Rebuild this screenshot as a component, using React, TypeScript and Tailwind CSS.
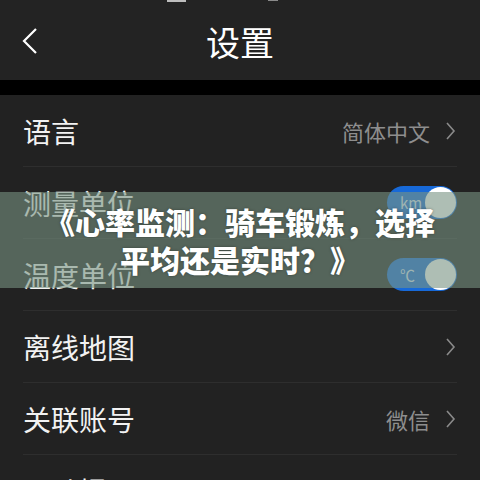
const Chevron = () => (
  <svg width="11" height="18" viewBox="0 0 11 18" fill="none" className="shrink-0">
    <polyline points="2,1 9,9 2,17" stroke="#8a8a8a" strokeWidth="1.6" fill="none" />
  </svg>
);

const Toggle = ({ label }: { label: string }) => (
  <div className="w-[70px] h-[33px] rounded-full bg-[#1769d8] flex items-center justify-between pl-[13px] pr-[1px]">
    <span className="text-[15px] text-[#d7e4f7] leading-none">{label}</span>
    <div className="w-[31px] h-[31px] rounded-full bg-white" />
  </div>
);

type Row = { label: string; value?: string; arrow?: boolean; toggle?: string };

const rows: Row[] = [
  { label: "语言", value: "简体中文", arrow: true },
  { label: "测量单位", toggle: "km" },
  { label: "温度单位", toggle: "℃" },
  { label: "离线地图", arrow: true },
  { label: "关联账号", value: "微信", arrow: true },
  { label: "运动提醒", arrow: true },
];

export default function App() {
  return (
    <div
      className="relative w-[480px] h-[480px] overflow-hidden bg-[#222222] text-white"
      style={{ fontFamily: '"Noto Sans CJK SC", "Noto Sans", sans-serif' }}
    >
      {/* status bar remnants */}
      <div className="absolute top-0 left-[167px] w-[19px] h-[2px] bg-[#bdbdbd]" />
      <div className="absolute top-0 left-[268px] w-[10px] h-[1px] bg-[#8a8a8a]" />

      <div className="h-[80px] bg-[#232323] grid grid-cols-[60px_1fr_60px] items-center">
        <div className="pl-[21px] pt-[2px]">
          <svg width="17" height="28" viewBox="0 0 17 28" fill="none">
            <polyline points="15,2 3,14 15,26" stroke="#ffffff" strokeWidth="2.2" fill="none" />
          </svg>
        </div>
        <div className="text-center text-[34px] leading-none pt-[4px]">设置</div>
        <div />
      </div>
      <div className="h-[15px] bg-black" />

      <div className="flex flex-col">
        {rows.map((r, i) => (
          <div key={i} className="px-[23px]">
            <div className="h-[72px] border-b border-[#2e2e2e] flex items-center justify-between">
              <span className="text-[28px] leading-none text-[#f2f2f2]">{r.label}</span>
              {r.toggle ? (
                <Toggle label={r.toggle} />
              ) : (
                <div className="flex items-center gap-[15px] pr-[1px]">
                  {r.value && <span className="text-[22px] leading-none text-[#8e8e8e]">{r.value}</span>}
                  {r.arrow && <Chevron />}
                </div>
              )}
            </div>
          </div>
        ))}
      </div>

      {/* overlay banner */}
      <div className="absolute left-0 top-[192px] w-[480px] h-[96px] bg-[rgba(120,147,130,0.6)] flex flex-col items-center justify-center">
        <div
          className="text-[30px] font-black leading-[38px] text-white text-center"
          style={{ textShadow: "0 0 3px rgba(0,0,0,0.35)" }}
        >
          <div>《心率监测：骑车锻炼，选择</div>
          <div>平均还是实时？》</div>
        </div>
      </div>
    </div>
  );
}
